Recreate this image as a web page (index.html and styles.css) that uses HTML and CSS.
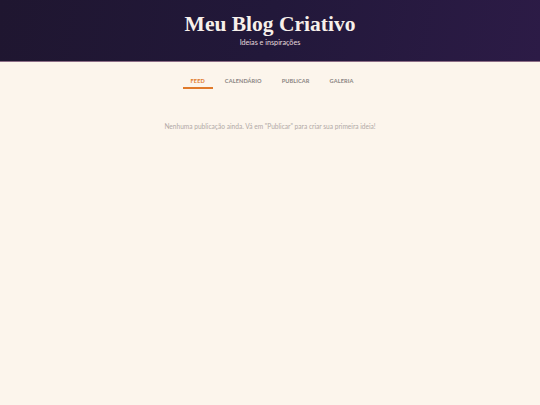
FILE: index.html
```html
<!DOCTYPE html>
<html lang="pt">
<head>
<meta charset="utf-8">
<link rel="stylesheet" href="styles.css">
</head>
<body>
<header class="hero">
  <h1 class="title">Meu Blog Criativo</h1>
  <p class="subtitle">Ideias e inspirações</p>
</header>
<nav class="tabs">
  <a class="tab active">Feed</a>
  <a class="tab">Calendário</a>
  <a class="tab">Publicar</a>
  <a class="tab">Galeria</a>
</nav>
<main class="feed">
  <p class="empty">Nenhuma publicação ainda. Vá em "Publicar" para criar sua primeira ideia!</p>
</main>
</body>
</html>
```
FILE: styles.css
```css
html, body { margin: 0; padding: 0; }
body {
  background: #fcf5ec;
  font-family: Lato, "Open Sans", sans-serif;
  width: 540px;
  height: 405px;
  overflow: hidden;
}
.hero {
  height: 61px;
  background: linear-gradient(100deg, #1f1630 0%, #22183a 50%, #2c1b46 100%);
  border-bottom: 1px solid #8c6d86;
  display: flex;
  flex-direction: column;
  align-items: center;
}
.title {
  margin: 9px 0 0;
  font-family: "Liberation Serif", "DejaVu Serif", serif;
  font-weight: bold;
  font-size: 21.5px;
  line-height: 30px;
  color: #f7f0ea;
}
.subtitle {
  margin: -1px 0 0;
  font-size: 7.2px;
  line-height: 9px;
  color: #e6d8dc;
}
.tabs {
  display: flex;
  justify-content: center;
  gap: 4px;
  margin-top: 13px;
  padding-left: 4px;
}
.tab {
  font-size: 5.6px;
  font-weight: bold;
  text-transform: uppercase;
  color: #8a8482;
  padding: 2px 8px 3px;
  letter-spacing: 0.1px;
  line-height: 7px;
  border-bottom: 2px solid transparent;
}
.tab.active {
  color: #e07a2b;
  border-bottom-color: #e07a2b;
}
.feed {
  display: flex;
  justify-content: center;
  margin-top: 33px;
}
.empty {
  margin: 0;
  font-size: 6.6px;
  color: #b1a9a6;
}
```
